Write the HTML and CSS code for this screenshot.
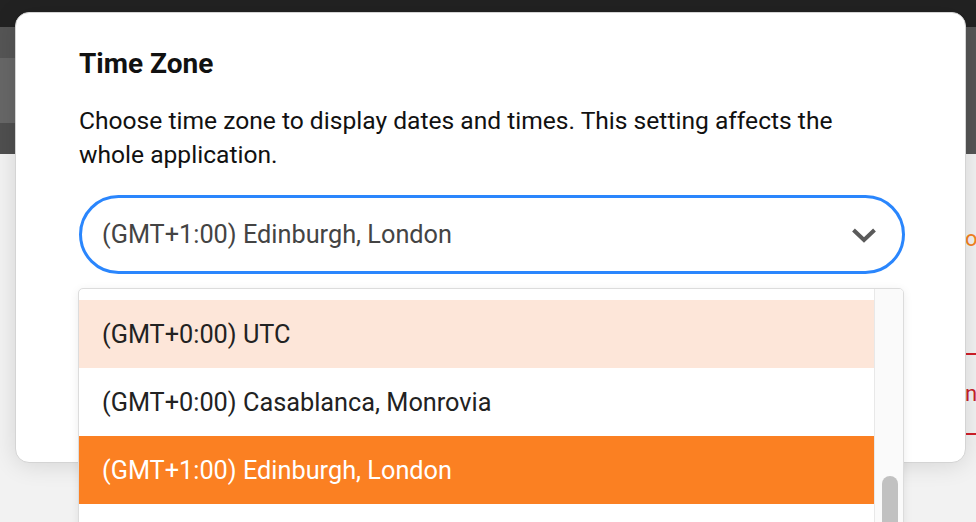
FILE: index.html
```html
<!DOCTYPE html>
<html lang="en">
<head>
<meta charset="utf-8">
<title>Time Zone</title>
<link rel="stylesheet" href="styles.css">
</head>
<body>
<div class="app">
  <header class="header">
    <div class="topbar"></div>
    <div class="navband">
      <div class="navside">
        <div class="nav-a"></div>
        <div class="nav-b"></div>
        <div class="nav-c"></div>
      </div>
    </div>
  </header>
  <main class="page">
    <div class="page-col">
      <div class="frag-o">o</div>
      <div class="rule first"></div>
      <div class="frag-n">n</div>
      <div class="rule"></div>
    </div>
  </main>
</div>

<div class="modal" role="dialog" aria-labelledby="tz-title">
  <h2 class="modal-title" id="tz-title">Time Zone</h2>
  <p class="modal-desc">Choose time zone to display dates and times. This setting affects the whole application.</p>
  <div class="select-wrap">
    <div class="select">
      <span class="select-value">(GMT+1:00) Edinburgh, London</span>
      <svg class="chevron" width="26" height="17" viewBox="0 0 26 17" aria-hidden="true">
        <path d="M2.5 3 L13 13 L23.5 3" fill="none" stroke="#5a5a5a" stroke-width="4" stroke-linecap="butt" stroke-linejoin="miter"/>
      </svg>
    </div>
    <div class="dropdown">
      <ul class="options">
        <li class="option hover">(GMT+0:00) UTC</li>
        <li class="option">(GMT+0:00) Casablanca, Monrovia</li>
        <li class="option selected">(GMT+1:00) Edinburgh, London</li>
        <li class="option"></li>
      </ul>
      <div class="scrollbar"><div class="thumb"></div></div>
    </div>
  </div>
</div>
</body>
</html>
```
FILE: styles.css
```css
* { box-sizing: border-box; }

html, body {
  margin: 0;
  padding: 0;
  height: 100%;
  overflow: hidden;
}

body {
  font-family: Roboto, "Liberation Sans", Arial, sans-serif;
  background: #f2f2f2;
  width: 976px;
  height: 522px;
  position: relative;
}

.app {
  display: flex;
  flex-direction: column;
  height: 522px;
}

.header {
  display: flex;
  flex-direction: column;
}

.topbar {
  height: 27px;
  background: #222222;
}

.navband {
  height: 127px;
  background: #555555;
  display: flex;
}

.navside {
  width: 200px;
  display: flex;
  flex-direction: column;
}

.nav-a { height: 31px; background: #555555; }
.nav-b { height: 65px; background: #676767; }
.nav-c { height: 31px; background: #4f4f4f; }

.page {
  flex: 1;
  background: #f2f2f2;
  display: flex;
}

.page-col {
  margin-left: 965px;
  width: 60px;
  padding-top: 72px;
  display: flex;
  flex-direction: column;
}

.frag-o {
  color: #f58220;
  font-size: 22px;
  line-height: 26px;
  height: 26px;
}

.rule {
  height: 2px;
  background: #d0202a;
}

.rule.first {
  margin-top: 101px;
}

.frag-n {
  color: #c8202a;
  font-size: 22px;
  line-height: 26px;
  height: 78px;
  padding-top: 26px;
}

/* Modal */
.modal {
  position: absolute;
  left: 15px;
  top: 12px;
  width: 951px;
  height: 451px;
  background: #ffffff;
  border: 1px solid #d4d4d4;
  border-radius: 14px;
  box-shadow: 0 2px 24px rgba(0, 0, 0, 0.12);
  padding: 35px 0 0 63px;
}

.modal-title {
  margin: 0;
  font-size: 28px;
  line-height: 32px;
  font-weight: 700;
  color: #111111;
}

.modal-desc {
  margin: 24px 0 0 0;
  width: 800px;
  font-size: 24.6px;
  line-height: 34px;
  color: #111111;
}

.select-wrap {
  position: relative;
  width: 826px;
  margin-top: 23px;
}

.select {
  height: 79px;
  border: 3px solid #2a86fd;
  border-radius: 40px;
  display: flex;
  align-items: center;
  justify-content: space-between;
  padding: 0 25px 0 20px;
  background: #ffffff;
}

.select-value {
  font-size: 25.3px;
  color: #444444;
  line-height: 30px;
}

.chevron {
  display: block;
  margin-top: 1px;
}

.dropdown {
  position: absolute;
  left: -1px;
  top: 93px;
  width: 826px;
  height: 260px;
  background: #ffffff;
  border: 1px solid #dcdcdc;
  border-radius: 5px 5px 0 0;
  box-shadow: 0 2px 10px rgba(0, 0, 0, 0.08);
  display: flex;
  overflow: hidden;
}

.options {
  list-style: none;
  margin: 0;
  padding: 11px 0 0 0;
  flex: 1;
}

.option {
  height: 68px;
  display: flex;
  align-items: center;
  padding-left: 23px;
  font-size: 25.3px;
  color: #222222;
  white-space: nowrap;
}

.option.hover {
  background: #fde6d9;
}

.option.selected {
  background: #fb8022;
  color: #ffffff;
}

.scrollbar {
  width: 29px;
  background: #fafafa;
  border-left: 1px solid #e8e8e8;
  padding: 187px 0 0 7px;
}

.thumb {
  width: 16px;
  height: 120px;
  border-radius: 8px;
  background: #c1c1c1;
}
```
